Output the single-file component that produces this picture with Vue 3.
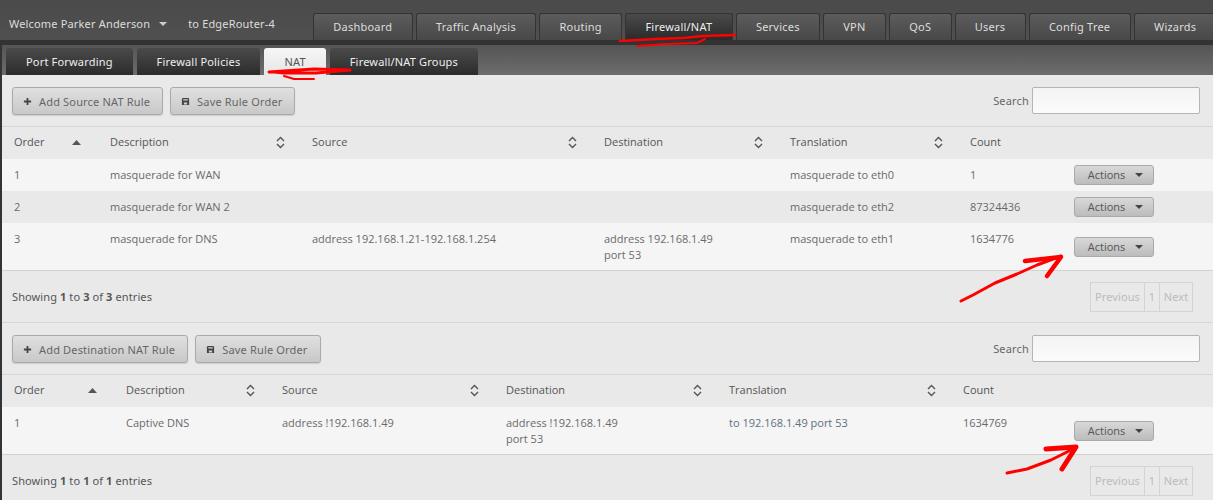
<template>
  <div class="page">
    <header class="topbar">
      <div class="welcome">
        <span>Welcome Parker Anderson</span>
        <i class="caret light"></i>
        <span class="router">to EdgeRouter-4</span>
      </div>
      <nav class="main-tabs">
        <a v-for="tab in mainTabs" :key="tab" :class="['main-tab', { active: tab === 'Firewall/NAT' }]">{{ tab }}</a>
      </nav>
    </header>

    <div class="sub-bar">
      <a v-for="tab in subTabs" :key="tab" :class="['sub-tab', { active: tab === 'NAT' }]">{{ tab }}</a>
    </div>

    <section v-for="table in tables" :key="table.addLabel" class="panel">
      <div class="toolbar">
        <button class="btn">
          <svg class="btn-icon" viewBox="0 0 10 10"><path d="M4 1h2v3h3v2H6v3H4V6H1V4h3z" /></svg>
          {{ table.addLabel }}
        </button>
        <button class="btn">
          <svg class="btn-icon" viewBox="0 0 10 10"><path fill-rule="evenodd" d="M2 1h6l1 1v7H1V2zM2.5 2.4v1.4h5V2.4zM3.2 6v2.4h3.6V6z" /></svg>
          Save Rule Order
        </button>
        <label class="search">Search <input type="text" /></label>
      </div>

      <table class="rules">
        <colgroup>
          <col v-for="(w, i) in table.widths" :key="i" :style="{ width: w + 'px' }" />
        </colgroup>
        <thead>
          <tr>
            <th v-for="(h, i) in headers" :key="h">
              <span>{{ h }}</span>
              <svg v-if="i === 0" class="sort order-sort" viewBox="0 0 9 5"><path d="M4.5 0L9 5H0z" /></svg>
              <svg v-else-if="i < 5" class="sort" viewBox="0 0 9 13">
                <path d="M1 5l3.5-3.5L8 5M1 8l3.5 3.5L8 8" fill="none" stroke-width="1.4" />
              </svg>
            </th>
            <th></th>
          </tr>
        </thead>
        <tbody>
          <tr v-for="row in table.rows" :key="row.order">
            <td>{{ row.order }}</td>
            <td>{{ row.description }}</td>
            <td>{{ row.source }}</td>
            <td>
              <template v-for="line in row.destination" :key="line">{{ line }}<br /></template>
            </td>
            <td :class="{ link: row.link }">{{ row.translation }}</td>
            <td>{{ row.count }}</td>
            <td class="action-cell">
              <button :class="['actions', { offset: row.destination.length > 1 }]">Actions <i class="caret"></i></button>
            </td>
          </tr>
        </tbody>
      </table>

      <div class="table-foot">
        <span>Showing <b>1</b> to <b>{{ table.rows.length }}</b> of <b>{{ table.rows.length }}</b> entries</span>
        <div class="pager">
          <span class="prev">Previous</span>
          <span class="num">1</span>
          <span class="next">Next</span>
        </div>
      </div>
    </section>

    <!-- red marks someone drew on the screenshot -->
    <svg class="marks" viewBox="0 0 1213 500" fill="none" stroke="#f00" stroke-linecap="round" stroke-linejoin="round">
      <path stroke-width="2.5" d="M620 41l35-2 28-1 20-2 32-1" />
      <path stroke-width="2" d="M637 46l30-2 30-1 8-4" />
      <path stroke-width="3" d="M269 72l45-3 36 1-34 3-32 0-10-1" />
      <path stroke-width="2" d="M284 76l10 3h20" />
      <path stroke-width="3" d="M961 301l12-6 22-12 22-9 20-9 24-9" />
      <path stroke-width="4.5" d="M1025 261l36-4-14 19" />
      <path stroke-width="3" d="M1007 473l20-4 24-9 24-12" />
      <path stroke-width="5" d="M1046 449l30-2-14 22" />
    </svg>
  </div>
</template>

<script setup>
const mainTabs = ['Dashboard', 'Traffic Analysis', 'Routing', 'Firewall/NAT', 'Services', 'VPN', 'QoS', 'Users', 'Config Tree', 'Wizards'];
const subTabs = ['Port Forwarding', 'Firewall Policies', 'NAT', 'Firewall/NAT Groups'];
const headers = ['Order', 'Description', 'Source', 'Destination', 'Translation', 'Count'];

const tables = [
  {
    addLabel: 'Add Source NAT Rule',
    widths: [96, 202, 292, 186, 180, 106, 149],
    rows: [
      { order: 1, description: 'masquerade for WAN', source: '', destination: [''], translation: 'masquerade to eth0', count: '1' },
      { order: 2, description: 'masquerade for WAN 2', source: '', destination: [''], translation: 'masquerade to eth2', count: '87324436' },
      { order: 3, description: 'masquerade for DNS', source: 'address 192.168.1.21-192.168.1.254', destination: ['address 192.168.1.49', 'port 53'], translation: 'masquerade to eth1', count: '1634776' }
    ]
  },
  {
    addLabel: 'Add Destination NAT Rule',
    widths: [112, 156, 224, 223, 234, 113, 149],
    rows: [
      { order: 1, description: 'Captive DNS', source: 'address !192.168.1.49', destination: ['address !192.168.1.49', 'port 53'], translation: 'to 192.168.1.49 port 53', link: true, count: '1634769' }
    ]
  }
];
</script>

<style>
html, body {
  height: 500px;
  overflow: hidden;
}
</style>

<style scoped>
.page {
  position: relative;
  width: 1213px;
  height: 500px;
  overflow: hidden;
  background: #333;
  font-family: "Noto Sans", "Open Sans", sans-serif;
  font-size: 11px;
  letter-spacing: 0.17px;
  color: #666;
}

.topbar {
  display: flex;
  height: 40px;
  padding-top: 13px;
  box-sizing: border-box;
  background: linear-gradient(#4a4a4a, #505050);
}

.welcome {
  width: 313px;
  flex: none;
  box-sizing: border-box;
  padding: 3px 0 0 9px;
  color: #ddd;
  line-height: 15px;
}

.router {
  margin-left: 21px;
}

.caret {
  display: inline-block;
  width: 0;
  height: 0;
  margin-left: 9px;
  vertical-align: 2px;
  border-left: 4px solid transparent;
  border-right: 4px solid transparent;
  border-top: 4px solid #444;
}

.caret.light {
  border-top-color: #ccc;
}

.main-tabs {
  display: flex;
  gap: 3px;
  flex: none;
}

.main-tab {
  box-sizing: border-box;
  height: 27px;
  padding: 0 19.33px;
  line-height: 26px;
  letter-spacing: 0.22px;
  color: #ddd;
  background: linear-gradient(#5c5c5c, #484848);
  border: 1px solid #333;
  border-bottom: 0;
  border-radius: 3px 3px 0 0;
  white-space: nowrap;
}

.main-tab.active {
  background: linear-gradient(#4a4a4a, #2a2a2a);
  color: #eee;
}

.sub-bar {
  display: flex;
  gap: 4px;
  height: 30px;
  margin: 5px 0 0 2px;
  padding: 3px 0 0 4px;
  box-sizing: border-box;
  background: linear-gradient(#555, #6c6c6c);
}

.sub-tab {
  height: 27px;
  padding: 0 20px;
  box-sizing: border-box;
  line-height: 28px;
  letter-spacing: 0.18px;
  color: #eee;
  background: linear-gradient(#4a4a4a, #2c2c2c);
  border-radius: 3px 3px 0 0;
  white-space: nowrap;
}

.sub-tab.active {
  background: linear-gradient(#f6f6f6, #e6e6e6);
  color: #555;
}

.panel {
  margin-left: 2px;
  background: #e9e9e9;
}

.toolbar {
  display: flex;
  align-items: flex-start;
  gap: 7px;
  height: 52px;
  padding: 12px 13px 0 10px;
  box-sizing: border-box;
  border-bottom: 1px solid #d6d6d6;
}

.btn {
  display: flex;
  align-items: center;
  gap: 7px;
  height: 28px;
  padding: 0 12px 0 10px;
  box-sizing: border-box;
  font: inherit;
  letter-spacing: 0.17px;
  color: #666;
  background: linear-gradient(#e0e0e0, #c8c8c8);
  border: 1px solid #aaa;
  border-radius: 3px;
  box-shadow: 0 1px 1px rgba(0, 0, 0, 0.12);
  white-space: nowrap;
}

.btn-icon {
  width: 9px;
  height: 9px;
  fill: #444;
}

.search {
  display: flex;
  align-items: center;
  gap: 3px;
  height: 27px;
  margin-left: auto;
  color: #666;
}

.search input {
  width: 168px;
  height: 27px;
  padding: 0;
  box-sizing: border-box;
  background: linear-gradient(#f4f4f4, #fbfbfb);
  border: 1px solid #b5b5b5;
  border-radius: 2px;
}

.rules {
  width: 1211px;
  table-layout: fixed;
  border-collapse: separate;
  border-spacing: 0;
  font-family: "Open Sans", "Noto Sans", sans-serif;
  letter-spacing: 0;
}

.rules th {
  position: relative;
  height: 32px;
  padding: 0 12px 4px;
  box-sizing: border-box;
  text-align: left;
  font-weight: 400;
  color: #555;
  vertical-align: middle;
}

.sort {
  position: absolute;
  top: 9px;
  right: 15px;
  width: 9px;
  height: 13px;
  fill: #555;
  stroke: #555;
}

.order-sort {
  top: 13px;
  right: 17px;
  height: 5px;
  stroke: none;
}

.rules td {
  padding: 8px 12px;
  line-height: 16px;
  vertical-align: top;
  background: #f5f5f5;
  color: #6a6a6a;
}

.rules tbody tr:nth-child(even) td {
  background: #e9e9e9;
}

.rules tbody tr:last-child td {
  padding-bottom: 7px;
  border-bottom: 1px solid #d2d2d2;
}

.rules td.link {
  color: #5c6f80;
}

.rules td.action-cell {
  padding: 6px 0 0 10px;
}

.actions {
  display: block;
  width: 80px;
  height: 20px;
  padding: 0 0 0 3px;
  font: inherit;
  color: #555;
  background: linear-gradient(#d8d8d8, #bcbcbc);
  border: 1px solid #aaa;
  border-radius: 3px;
}

.actions .caret {
  margin-left: 7px;
}

.actions.offset {
  margin-top: 8px;
}

.table-foot {
  display: flex;
  align-items: center;
  justify-content: space-between;
  height: 52px;
  padding: 0 20px 0 10px;
  box-sizing: border-box;
  border-bottom: 1px solid #d6d6d6;
  letter-spacing: 0.1px;
  color: #555;
}

.pager {
  display: flex;
  height: 30px;
  line-height: 28px;
  box-sizing: border-box;
  color: #bbb;
  border: 1px solid #d4d4d4;
}

.pager span {
  box-sizing: border-box;
  text-align: center;
}

.prev {
  width: 54px;
  border-right: 1px solid #d4d4d4;
}

.num {
  width: 15px;
  border-right: 1px solid #d4d4d4;
}

.next {
  width: 32px;
}

.marks {
  position: absolute;
  inset: 0;
  width: 1213px;
  height: 500px;
  pointer-events: none;
}
</style>
